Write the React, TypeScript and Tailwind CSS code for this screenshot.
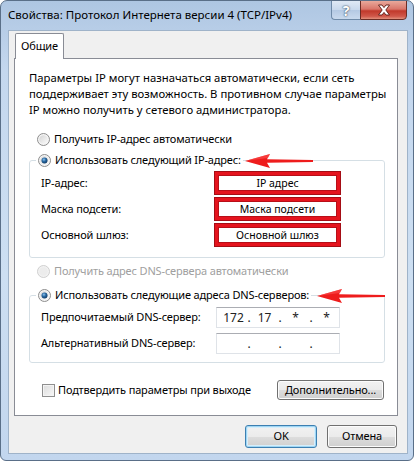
import React from "react";

function Radio({ checked, disabled }: { checked?: boolean; disabled?: boolean }) {
  return (
    <svg width="13" height="13" viewBox="0 0 13 13" className="shrink-0">
      <defs>
        <linearGradient id="rbg" x1="0" y1="0" x2="1" y2="1">
          <stop offset="0" stopColor="#d4d4d4" />
          <stop offset="1" stopColor="#fbfbfb" />
        </linearGradient>
        <radialGradient id="rdot" cx="0.4" cy="0.35" r="0.7">
          <stop offset="0" stopColor="#8fc4ee" />
          <stop offset="0.45" stopColor="#2a6aa3" />
          <stop offset="1" stopColor="#0d3660" />
        </radialGradient>
      </defs>
      <circle cx="6.5" cy="6.5" r="6" fill={disabled ? "#f2f2f2" : "#f4f4f4"} stroke={disabled ? "#cfcfcf" : "#8d8d8d"} strokeWidth="1" />
      <circle cx="6.5" cy="6.5" r="4.3" fill={disabled ? "#ececec" : "url(#rbg)"} />
      {checked && <circle cx="6.5" cy="6.5" r="3" fill="url(#rdot)" />}
    </svg>
  );
}

function Arrow({ className }: { className: string }) {
  return (
    <svg width="72" height="18" viewBox="0 0 72 18" className={"absolute pointer-events-none " + className}>
      <path d="M2 9 L27 2 L24 7.3 L70 8 L70 10 L24 10.7 L27 16 Z" fill="#ee1c1c" />
      <path d="M2 9 L27 2 L25 6 Z" fill="#ff5a5a" opacity="0.5" />
    </svg>
  );
}

function RedBox({ children }: { children: React.ReactNode }) {
  return (
    <div className="w-[125px] h-[22px] shrink-0 bg-white border-[3px] border-[#e5141e] shadow-[0_0_0_1px_#a50d15,inset_0_0_0_1px_#b80f18] flex items-center justify-center text-[10.5px] leading-none text-black whitespace-nowrap tracking-normal">
      {children}
    </div>
  );
}

function IpBox({ parts }: { parts: string[] }) {
  return (
    <div className="w-[124px] h-[21px] shrink-0 bg-white border border-[#dfe3e8] border-t-[#abadb3] flex items-center pl-[4px] text-[12px] tracking-normal text-[#222]">
      <span className="w-[25px] text-center">{parts[0]}</span>
      <span className="w-[6px] text-center">.</span>
      <span className="w-[25px] text-center">{parts[1]}</span>
      <span className="w-[6px] text-center">.</span>
      <span className="w-[25px] text-center">{parts[2]}</span>
      <span className="w-[6px] text-center">.</span>
      <span className="w-[25px] text-center">{parts[3]}</span>
    </div>
  );
}

function Button({ children, w, isDefault }: { children: React.ReactNode; w: string; isDefault?: boolean }) {
  return (
    <div
      className={
        "h-full shrink-0 rounded-[3px] border flex items-center justify-center text-black whitespace-nowrap bg-[linear-gradient(#f2f2f2_0%,#ebebeb_50%,#dddddd_51%,#cfcfcf_100%)] " +
        w +
        (isDefault
          ? " border-[#3c7fb1] shadow-[inset_0_0_0_1px_#9fd6f4,inset_0_0_0_2px_#d6eefb]"
          : " border-[#707070] shadow-[inset_0_0_0_1px_#fcfcfc]")
      }
    >
      {children}
    </div>
  );
}

export default function App() {
  return (
    <div
      className="w-[414px] h-[461px] flex flex-col rounded-t-[7px] rounded-b-[6px] border border-[#5a6f88] bg-[linear-gradient(180deg,#aec6e2_0%,#c4d7ee_15%,#cddff2_60%,#c2d6ee_100%)] pl-[7px] pr-[5px] pb-[6px] overflow-hidden text-[11px] tracking-[-0.15px]"
      style={{ fontFamily: '"Noto Sans", "Open Sans", sans-serif' }}
    >
      {/* Title bar */}
      <div className="h-[29px] flex items-start justify-between shrink-0">
        <div className="pt-[6px] text-[11.5px] tracking-normal text-black leading-[16px] whitespace-nowrap">
          Свойства: Протокол Интернета версии 4 (TCP/IPv4)
        </div>
        <div className="flex items-start h-[20px] mr-[1px] -mt-[1px]">
          <div className="w-[29px] h-[20px] rounded-bl-[4px] border border-[#6e8aa8] border-r-0 bg-[linear-gradient(#dfe9f5_0%,#c8d8ec_50%,#b4c9e3_51%,#c9daee_100%)] flex items-center justify-center text-[14px] font-bold text-white [text-shadow:0_0_1px_#3c4f66,0_0_2px_#3c4f66]">
            ?
          </div>
          <div className="w-[47px] h-[20px] rounded-br-[4px] border border-[#6b2d25] bg-[linear-gradient(#e9a99b_0%,#d9766a_45%,#c1392b_55%,#d0584a_85%,#e2917d_100%)] flex items-center justify-center">
            <svg width="14" height="12" viewBox="0 0 14 12">
              <path d="M1.5 1 L5 1 L7 3.6 L9 1 L12.5 1 L8.8 6 L12.5 11 L9 11 L7 8.4 L5 11 L1.5 11 L5.2 6 Z" fill="#fff" stroke="#5b1a12" strokeWidth="0.9" strokeLinejoin="round" />
            </svg>
          </div>
        </div>
      </div>

      {/* Client area */}
      <div className="flex-1 flex flex-col bg-[#f0f0f0] border border-[#9fb3c9] pt-[2px]">
        {/* Tab strip */}
        <div className="flex pl-[6px] h-[26px] shrink-0 relative z-10">
          <div className="w-[49px] h-[26px] bg-white border border-[#898c95] border-b-0 rounded-t-[2px] flex items-center justify-center text-black">
            Общие
          </div>
        </div>
        {/* Panel */}
        <div className="relative -mt-px ml-[5px] mr-[9px] h-[358px] shrink-0 bg-white border border-[#898c95] flex flex-col pl-[14px] pr-[12px] text-black">
          <div className="mt-[11px] leading-[16px] whitespace-nowrap text-[11.3px] tracking-normal">
            Параметры IP могут назначаться автоматически, если сеть
            <br />
            поддерживает эту возможность. В противном случае параметры
            <br />
            IP можно получить у сетевого администратора.
          </div>

          <div className="mt-[13px] h-[16px] flex items-center gap-[4px] pl-[8px] whitespace-nowrap">
            <Radio />
            <span>Получить IP-адрес автоматически</span>
          </div>

          <fieldset className="mt-[5px] border border-[#d5dfe5] rounded-[3px] px-[6px] pb-[11px]">
            <legend className="px-[2px] h-[16px] flex items-center gap-[4px] whitespace-nowrap">
              <Radio checked />
              <span>Использовать следующий IP-адрес:</span>
            </legend>
            <div className="flex flex-col gap-[4px] pl-[5px] pt-[4px] whitespace-nowrap">
              <div className="flex items-center justify-between pr-[38px]">
                <span>IP-адрес:</span>
                <RedBox>IP адрес</RedBox>
              </div>
              <div className="flex items-center justify-between pr-[38px]">
                <span>Маска подсети:</span>
                <RedBox>Маска подсети</RedBox>
              </div>
              <div className="flex items-center justify-between pr-[38px]">
                <span>Основной шлюз:</span>
                <RedBox>Основной шлюз</RedBox>
              </div>
            </div>
          </fieldset>

          <div className="mt-[5px] h-[16px] flex items-center gap-[4px] pl-[8px] text-[#a0a0a0] whitespace-nowrap">
            <Radio disabled />
            <span>Получить адрес DNS-сервера автоматически</span>
          </div>

          <fieldset className="mt-[8px] border border-[#d5dfe5] rounded-[3px] px-[6px] pb-[8px]">
            <legend className="px-[2px] h-[16px] flex items-center gap-[4px] whitespace-nowrap">
              <Radio checked />
              <span>Использовать следующие адреса DNS-серверов:</span>
            </legend>
            <div className="flex flex-col gap-[5px] pl-[5px] pt-[4px] whitespace-nowrap">
              <div className="flex items-center justify-between pr-[38px]">
                <span>Предпочитаемый DNS-сервер:</span>
                <IpBox parts={["172", "17", "*", "*"]} />
              </div>
              <div className="flex items-center justify-between pr-[38px]">
                <span>Альтернативный DNS-сервер:</span>
                <IpBox parts={["", "", "", ""]} />
              </div>
            </div>
          </fieldset>

          <div className="mt-[17px] h-[20px] flex items-center justify-between pl-[13px] pr-[1px] whitespace-nowrap">
            <div className="flex items-center gap-[3px]">
              <div className="w-[13px] h-[13px] shrink-0 border border-[#8f8f8f] bg-[linear-gradient(135deg,#dcdcdc,#f8f8f8)] shadow-[inset_0_0_0_1px_#f4f4f4]" />
              <span>Подтвердить параметры при выходе</span>
            </div>
            <Button w="w-[107px]">Дополнительно...</Button>
          </div>

          <Arrow className="left-[228px] top-[93px]" />
          <Arrow className="left-[300px] top-[228px]" />
        </div>

        {/* Bottom buttons */}
        <div className="mt-[9px] h-[23px] flex justify-end gap-[10px] pr-[10px]">
          <Button w="w-[72px]" isDefault>
            OK
          </Button>
          <Button w="w-[70px]">Отмена</Button>
        </div>
      </div>
    </div>
  );
}
